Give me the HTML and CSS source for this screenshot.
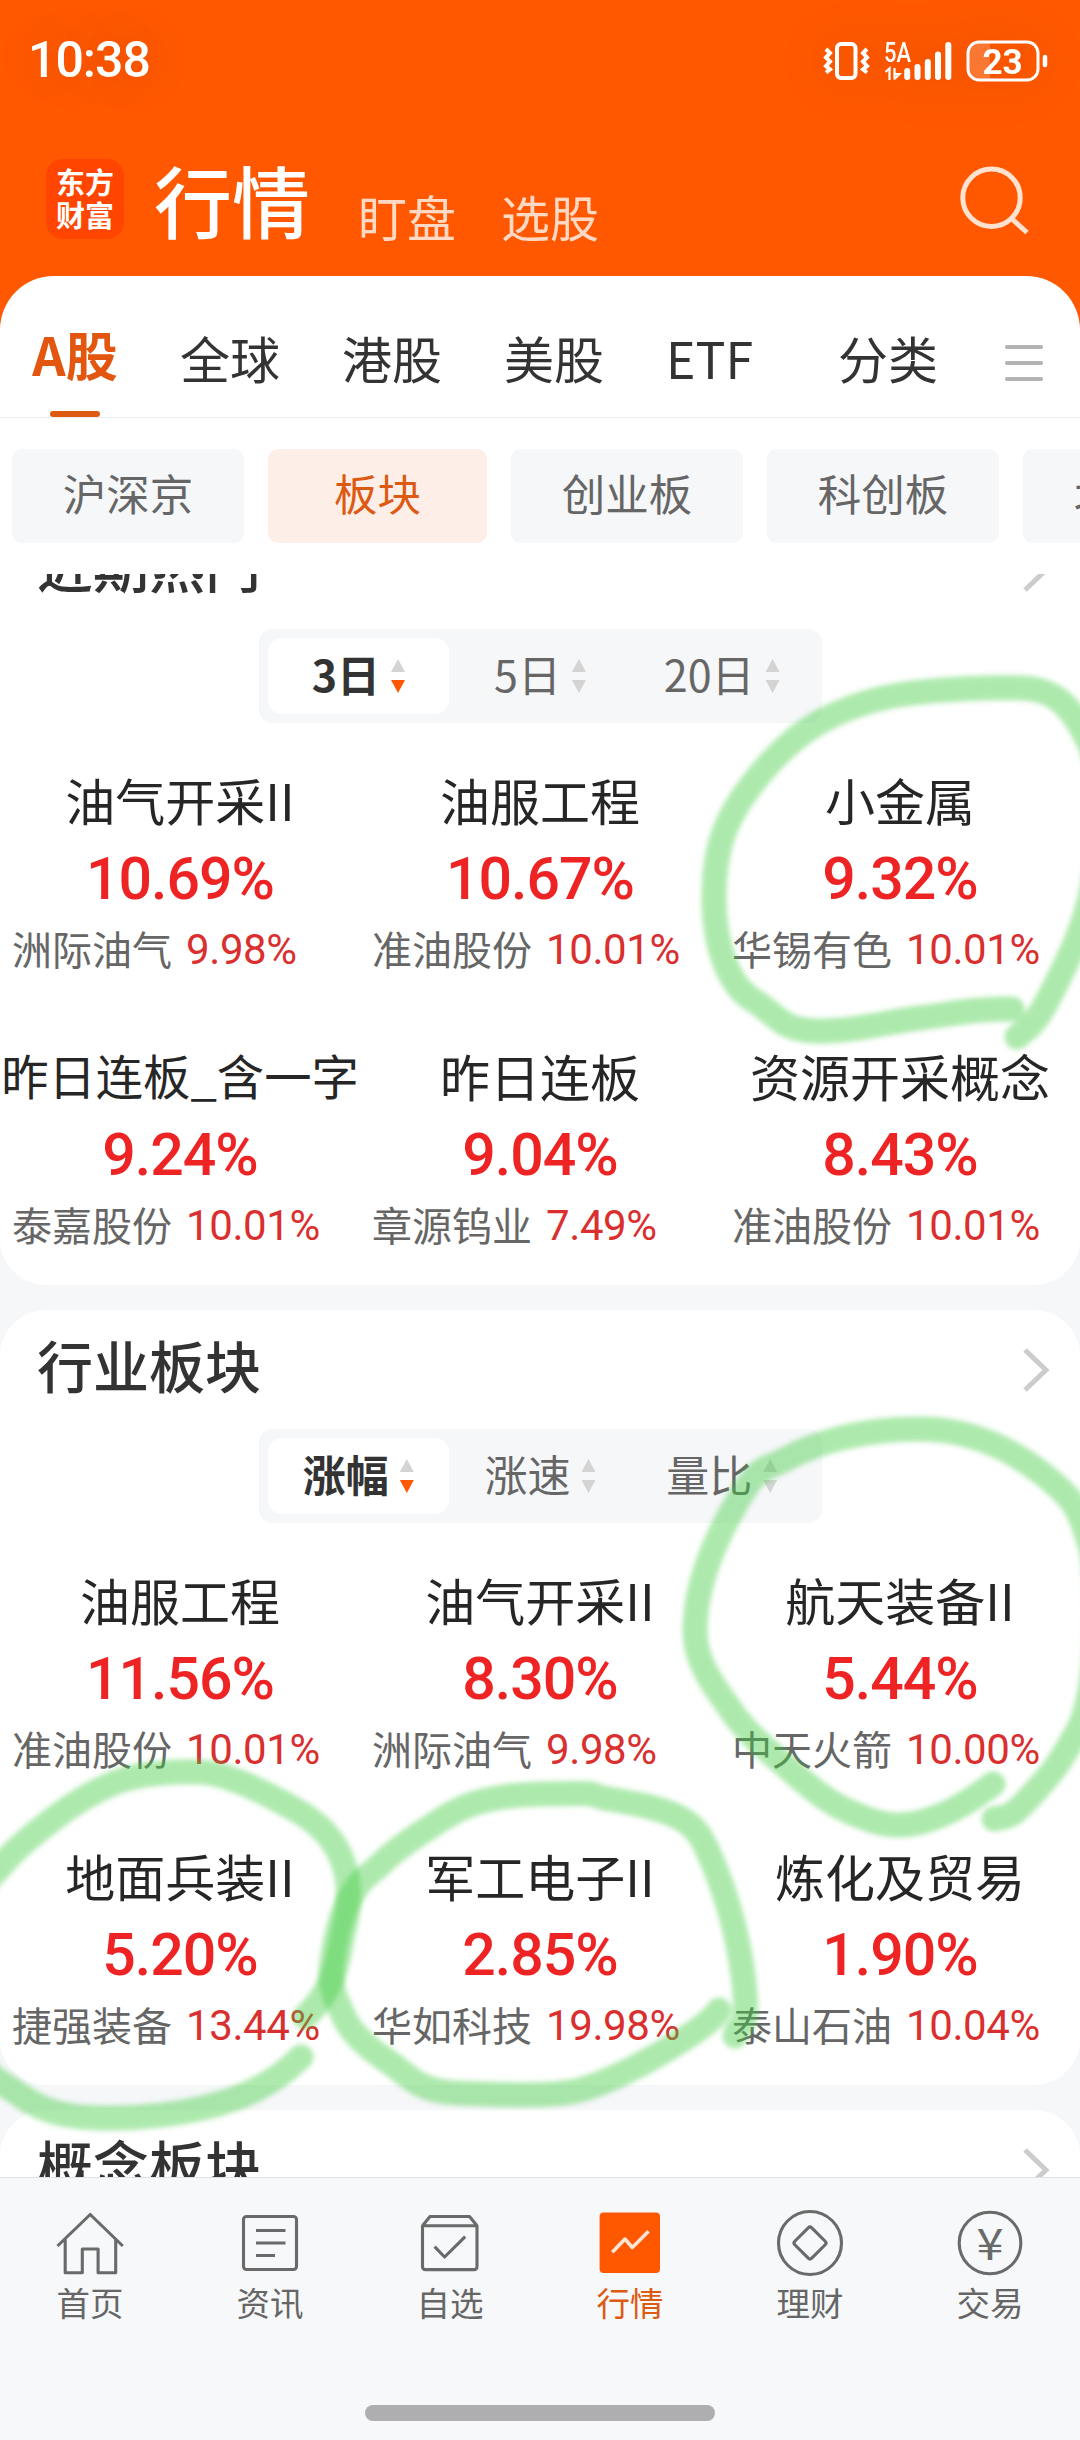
FILE: index.html
```html
<!DOCTYPE html>
<html lang="zh-CN">
<head>
    <meta charset="UTF-8">
    <meta name="viewport" content="width=device-width, initial-scale=1.0">
    <title>行情</title>
    <link rel="stylesheet" href="styles.css">
</head>
<body>
    <div class="screen">
        <div class="top">
            <div class="status-bar">
                <span class="time">10:38</span>
                <svg class="status-icons" width="228" height="48" viewBox="820 37 228 48">
                    <!-- vibrate -->
                    <rect x="837" y="44" width="18.5" height="34" rx="4" fill="none" stroke="#fff" stroke-width="4"/>
                    <path d="M826 49l4 4-4 4.500 4 4-4 4.500 4 3.500-4 3M867 49l-4 4 4 4.500-4 4 4 4.500-4 3.500 4 3" fill="none" stroke="#fff" stroke-width="4"/>
                    <!-- signal -->
                    <text class="net" x="884" y="61.500" textLength="27" lengthAdjust="spacingAndGlyphs">5A</text>
                    <path d="M885.500 72l4-3.500v11.500M894.500 68v11.500M894.500 79l5-5h-5" fill="none" stroke="#fff" stroke-width="2.200"/>
                    <path d="M907.200 71v6M917.500 67v10M927.800 62v15M938 54.500v22.500M948.300 45v32" stroke="#fff" stroke-width="6" stroke-linecap="round"/>
                    <!-- battery -->
                    <path d="M990 43H978a9 9 0 0 0-9 9v18a9 9 0 0 0 9 9h12z" fill="#fff" fill-opacity=".2"/>
                    <rect x="968" y="42" width="70" height="38" rx="11" fill="none" stroke="#fff" stroke-width="3"/>
                    <path d="M1045 57v8" stroke="#fff" stroke-width="4.500" stroke-linecap="round"/>
                    <text class="battery" x="982.500" y="74">23</text>
                </svg>
            </div>
            <div class="title-bar">
                <div class="logo"><span>东方</span><span>财富</span></div>
                <h1>行情</h1>
                <span class="link">盯盘</span>
                <span class="link">选股</span>
                <svg class="search" width="76" height="76" viewBox="954 160 76 76">
                    <circle cx="991.500" cy="196.700" r="28.700" fill="none" stroke="#ffe2d0" stroke-width="5"/>
                    <path d="M1011 217l16 14.500" stroke="#ffe2d0" stroke-width="5"/>
                </svg>
            </div>
            <div class="sheet">
                <div class="tabs">
                    <span class="tab active">A股</span>
                    <span class="tab">全球</span>
                    <span class="tab">港股</span>
                    <span class="tab">美股</span>
                    <span class="tab">ETF</span>
                    <span class="tab last">分类</span>
                    <div class="menu"><i></i><i></i><i></i></div>
                </div>
                <div class="chips">
                    <span class="chip">沪深京</span>
                    <span class="chip active">板块</span>
                    <span class="chip">创业板</span>
                    <span class="chip">科创板</span>
                    <span class="chip">北交所</span>
                </div>
            </div>
        </div>

        <div class="feed">
            <div class="card">
                <div class="card-head">
                    <h2>近期热门</h2>
                    <svg class="more" width="30" height="48" viewBox="0 0 30 48"><path d="M3 4l21 20L3 44"/></svg>
                </div>
                <div class="segment">
                    <div class="seg active">3日<span class="sort"><i class="up"></i><i class="down"></i></span></div>
                    <div class="seg">5日<span class="sort"><i class="up"></i><i class="down"></i></span></div>
                    <div class="seg">20日<span class="sort"><i class="up"></i><i class="down"></i></span></div>
                </div>
                <div class="grid">
                    <div class="item">
                        <div class="name">油气开采II</div>
                        <div class="pct">10.69%</div>
                        <div class="lead">洲际油气<span>9.98%</span></div>
                    </div>
                    <div class="item">
                        <div class="name">油服工程</div>
                        <div class="pct">10.67%</div>
                        <div class="lead">准油股份<span>10.01%</span></div>
                    </div>
                    <div class="item">
                        <div class="name">小金属</div>
                        <div class="pct">9.32%</div>
                        <div class="lead">华锡有色<span>10.01%</span></div>
                    </div>
                    <div class="item">
                        <div class="name long">昨日连板_含一字</div>
                        <div class="pct">9.24%</div>
                        <div class="lead">泰嘉股份<span>10.01%</span></div>
                    </div>
                    <div class="item">
                        <div class="name">昨日连板</div>
                        <div class="pct">9.04%</div>
                        <div class="lead">章源钨业<span>7.49%</span></div>
                    </div>
                    <div class="item">
                        <div class="name">资源开采概念</div>
                        <div class="pct">8.43%</div>
                        <div class="lead">准油股份<span>10.01%</span></div>
                    </div>
                </div>
            </div>

            <div class="card">
                <div class="card-head">
                    <h2>行业板块</h2>
                    <svg class="more" width="30" height="48" viewBox="0 0 30 48"><path d="M3 4l21 20L3 44"/></svg>
                </div>
                <div class="segment">
                    <div class="seg active">涨幅<span class="sort"><i class="up"></i><i class="down"></i></span></div>
                    <div class="seg">涨速<span class="sort"><i class="up"></i><i class="down"></i></span></div>
                    <div class="seg">量比<span class="sort"><i class="up"></i><i class="down"></i></span></div>
                </div>
                <div class="grid">
                    <div class="item">
                        <div class="name">油服工程</div>
                        <div class="pct">11.56%</div>
                        <div class="lead">准油股份<span>10.01%</span></div>
                    </div>
                    <div class="item">
                        <div class="name">油气开采II</div>
                        <div class="pct">8.30%</div>
                        <div class="lead">洲际油气<span>9.98%</span></div>
                    </div>
                    <div class="item">
                        <div class="name">航天装备II</div>
                        <div class="pct">5.44%</div>
                        <div class="lead">中天火箭<span>10.00%</span></div>
                    </div>
                    <div class="item">
                        <div class="name">地面兵装II</div>
                        <div class="pct">5.20%</div>
                        <div class="lead">捷强装备<span>13.44%</span></div>
                    </div>
                    <div class="item">
                        <div class="name">军工电子II</div>
                        <div class="pct">2.85%</div>
                        <div class="lead">华如科技<span>19.98%</span></div>
                    </div>
                    <div class="item">
                        <div class="name">炼化及贸易</div>
                        <div class="pct">1.90%</div>
                        <div class="lead">泰山石油<span>10.04%</span></div>
                    </div>
                </div>
            </div>

            <div class="card">
                <div class="card-head">
                    <h2>概念板块</h2>
                    <svg class="more" width="30" height="48" viewBox="0 0 30 48"><path d="M3 4l21 20L3 44"/></svg>
                </div>
            </div>
        </div>

        <div class="nav">
            <div class="nav-item">
                <svg width="72" height="72" viewBox="0 0 72 72"><path d="M3.500 39L36.200 7.500 68.800 39M11.200 32v33.700h17.100V42h15.800v23.700h17.600V32"/></svg>
                <span>首页</span>
            </div>
            <div class="nav-item">
                <svg width="72" height="72" viewBox="0 0 72 72"><rect x="9.500" y="9.500" width="53" height="53" rx="3"/><path d="M22 23.500h29.500M22 36h29.500M22 48.500h19"/></svg>
                <span>资讯</span>
            </div>
            <div class="nav-item">
                <svg width="72" height="72" viewBox="0 0 72 72"><path d="M8.500 18.800h54.500v41a2.800 2.800 0 0 1-2.800 2.800H11.300a2.800 2.800 0 0 1-2.800-2.800zl7.500-9.300h39.500l7.500 9.300M20.600 39.700l10 10.300 20.600-20.300"/></svg>
                <span>自选</span>
            </div>
            <div class="nav-item active">
                <svg width="72" height="72" viewBox="0 0 72 72"><rect class="tile" x="5.600" y="5.500" width="60.400" height="60.400" rx="4"/><path class="trend" d="M18.300 45.300L31 32l7.300 8.500 16.200-16.200"/></svg>
                <span>行情</span>
            </div>
            <div class="nav-item">
                <svg width="72" height="72" viewBox="0 0 72 72"><circle cx="36" cy="36" r="31.500"/><rect x="24" y="24" width="24" height="24" rx="2.500" transform="rotate(45 36 36)"/></svg>
                <span>理财</span>
            </div>
            <div class="nav-item">
                <svg width="72" height="72" viewBox="0 0 72 72"><circle cx="36" cy="36" r="30.800"/><text class="yen" x="36" y="52.500" textLength="27" lengthAdjust="spacingAndGlyphs">¥</text></svg>
                <span>交易</span>
            </div>
        </div>
        <div class="home-bar"><i></i></div>

        <!-- highlighter circles -->
        <svg class="marks" width="1080" height="2440" viewBox="0 0 1080 2440">
            <path d="M1012 1009C980 1008 950 1014 919 1018S850 1032 815 1031 775 1013 753 1000 714 950 714 897 728 815 753 783 800 733 820 722 870 699 905 694 990 687 1022 688 1072 705 1090 745 1105 880 1070 955 1032 1024 1017 1037"/>
            <path d="M993 1784C975 1797 955 1812 925 1821S875 1823 850 1812 805 1783 788 1768 748 1735 733 1713 695 1665 695 1631 707 1555 733 1509 760 1473 788 1458 860 1429 919 1429 1020 1455 1050 1480 1080 1515 1090 1545 1100 1690 1078 1730 1050 1775 1030 1797 1008 1816 994 1819"/>
            <path d="M301 2057C288 2070 275 2080 255 2090S190 2117 114 2118 30 2099 0 2082-35 2000-28 1940-15 1885 0 1867 30 1837 52 1820 92 1792 114 1783 170 1771 200 1772 275 1798 296 1810 333 1838 341 1857 351 1900 345 1925 340 1955 334 1973 315 2008 305 2017"/>
            <path d="M719 2010C715 2017 708 2022 700 2028S670 2048 654 2057 605 2083 580 2090 500 2095 458 2093 410 2076 386 2060 350 2030 344 2017 331 1990 331 1975 338 1920 350 1898 370 1875 382 1863 408 1841 430 1827 470 1796 540 1794 585 1795 609 1799 662 1808 680 1818 703 1840 710 1856 735 1915 743 1975 738 2022 735 2036"/>
        </svg>
    </div>
</body>
</html>
```

FILE: styles.css
```css
* {
    box-sizing: border-box;
}
body {
    margin: 0;
    font-family: "Noto Sans CJK SC", sans-serif;
    color: #333;
}
h1, h2 {
    margin: 0;
    font-weight: 500;
}
.screen {
    position: relative;
    display: flex;
    flex-direction: column;
    width: 1080px;
    height: 2440px;
    overflow: hidden;
    background: #f6f7f9;
}

/* header */
.top {
    background: #ff5800;
}
.status-bar {
    display: flex;
    justify-content: space-between;
    align-items: center;
    height: 122px;
    padding: 0 32px 2px 28px;
    color: #fff;
}
.time {
    font-family: Roboto, sans-serif;
    font-size: 50px;
    font-weight: 500;
    letter-spacing: -1px;
    text-shadow: 0 0 50px rgba(0, 0, 0, 0.2);
}
.status-icons {
    margin-top: 2px;
    filter: drop-shadow(0 0 26px rgba(0, 0, 0, 0.15));
}
.net {
    font: 500 27px Roboto, sans-serif;
    fill: #fff;
}
.battery {
    font: 700 35px Roboto, sans-serif;
    fill: #fff;
}
.title-bar {
    display: flex;
    align-items: center;
    height: 154px;
    padding: 0 50px 0 46px;
}
.logo {
    display: flex;
    flex-direction: column;
    gap: 4px;
    width: 78px;
    height: 80px;
    margin-right: 30px;
    padding-top: 8px;
    border-radius: 17px;
    background: #ff4500;
    color: #fff;
    font-size: 29px;
    font-weight: 700;
    line-height: 29px;
    text-align: center;
}
h1 {
    margin-right: 48px;
    color: #fff;
    font-size: 78px;
    line-height: 80px;
}
.link {
    margin: 34px 45px 0 0;
    color: #ffd9c4;
    font-size: 49px;
    line-height: 60px;
}
.search {
    margin-left: auto;
}
.sheet {
    border-radius: 54px 54px 0 0;
    background: #fff;
    overflow: hidden;
}
.tabs {
    display: flex;
    gap: 62px;
    height: 142px;
    padding: 0 37px 0 32px;
    border-bottom: 1px solid #ebebeb;
    font-size: 50px;
    line-height: 162px;
}
.tab {
    white-space: nowrap;
}
.tab.active {
    display: flex;
    flex-direction: column;
    align-items: center;
    width: 86px;
    color: #e2560f;
    font-size: 52px;
    font-weight: 700;
    line-height: 134px;
    padding-top: 11px;
    height: 141px;
}
.tab.active::after {
    content: "";
    flex: none;
    width: 50px;
    height: 6px;
    margin-top: -10px;
    border-radius: 3px;
    background: #dd5a12;
}
.tab.last {
    margin-left: 23px;
}
.menu {
    display: flex;
    flex-direction: column;
    gap: 12px;
    margin: 69px 0 0 auto;
}
.menu i {
    width: 38px;
    height: 4px;
    border-radius: 2px;
    background: #b3b3b3;
}
.chips {
    display: flex;
    gap: 24px;
    padding: 31px 0 31px 12px;
}
.chip {
    flex: none;
    width: 232px;
    height: 94px;
    border-radius: 10px;
    background: #f6f7f9;
    color: #666;
    font-size: 43.5px;
    line-height: 87px;
    text-align: center;
}
.chip.active {
    width: 219px;
    background: #fdeee8;
    color: #dc5a12;
}

/* board cards */
.feed {
    flex: 1;
    overflow: hidden;
}
.card {
    height: 775px;
    margin-bottom: 25px;
    border-radius: 46px;
    background: #fff;
}
.card:first-child {
    margin-top: -64px;
}
.card-head {
    display: flex;
    justify-content: space-between;
    align-items: center;
    height: 119px;
    padding: 0 28px 0 37px;
}
h2 {
    margin-top: -11px;
    font-size: 56px;
    line-height: 80px;
}
.more {
    fill: none;
    stroke: #ccc;
    stroke-width: 5;
}
.segment {
    display: flex;
    width: 563px;
    height: 94px;
    margin: 0 auto;
    padding: 9px;
    border-radius: 14px;
    background: #f6f7f9;
}
.seg {
    flex: 1;
    display: flex;
    justify-content: center;
    align-items: center;
    gap: 11px;
    border-radius: 14px;
    color: #666;
    font-size: 43px;
    line-height: 70px;
    padding-bottom: 6px;
}
.seg.active {
    background: #fff;
    color: #333;
    font-weight: 700;
}
.sort {
    display: flex;
    flex-direction: column;
    gap: 8px;
    margin-top: 6px;
}
.sort i {
    width: 14px;
    height: 13px;
    background: #d4d4d4;
}
.up {
    clip-path: polygon(50% 0, 100% 100%, 0 100%);
}
.down {
    clip-path: polygon(0 0, 100% 0, 50% 100%);
}
.seg.active .down {
    background: #ff5800;
}
.grid {
    display: grid;
    grid-template-columns: repeat(3, 360px);
    row-gap: 62px;
    margin-top: 41px;
    white-space: nowrap;
}
.name {
    color: #262626;
    font-size: 50px;
    line-height: 70px;
    text-align: center;
}
.name.long {
    font-size: 47.3px;
}
.pct {
    margin-top: 5px;
    color: #ee2323;
    font-family: Roboto, sans-serif;
    font-size: 59px;
    font-weight: 500;
    letter-spacing: -1px;
    line-height: 80px;
    text-align: center;
}
.lead {
    display: flex;
    gap: 14px;
    height: 59px;
    padding-left: 12px;
    color: #666;
    font-size: 40px;
    line-height: 58px;
}
.lead span {
    color: #d92f2f;
    font-family: Roboto, sans-serif;
    font-size: 42px;
    letter-spacing: -0.4px;
    line-height: 62px;
}

/* bottom navigation */
.nav {
    display: flex;
    height: 208px;
    padding-top: 29px;
    border-top: 1px solid #e0e1e3;
    background: #f7f8fa;
}
.nav-item {
    flex: 1;
    display: flex;
    flex-direction: column;
    align-items: center;
    color: #666;
    font-size: 33.5px;
    line-height: 46px;
}
.nav-item svg {
    fill: none;
    stroke: #6a6a6a;
    stroke-width: 3.1;
    stroke-linejoin: round;
}
.nav-item.active {
    color: #dc5a12;
}
.nav-item .tile {
    fill: #ff5800;
    stroke: none;
}
.nav-item .trend {
    stroke: #ffe6d6;
    stroke-width: 3.5;
}
.nav-item .yen {
    fill: #6a6a6a;
    stroke: none;
    font-size: 44px;
    text-anchor: middle;
}
.home-bar {
    display: flex;
    justify-content: center;
    height: 55px;
    padding-top: 20px;
    background: #f7f8fa;
}
.home-bar i {
    width: 350px;
    height: 16px;
    border-radius: 8px;
    background: #aeaeb0;
}

.marks {
    position: absolute;
    top: 0;
    left: 0;
    pointer-events: none;
}
.marks path {
    fill: none;
    stroke: #43ce43;
    stroke-width: 25;
    stroke-linecap: round;
    opacity: 0.43;
    filter: blur(2.5px);
}
```
